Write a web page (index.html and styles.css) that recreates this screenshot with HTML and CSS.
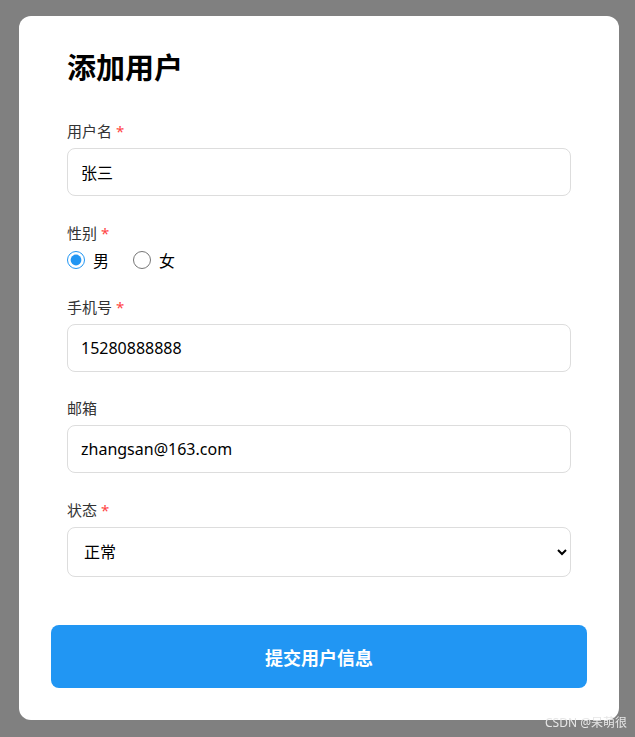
FILE: index.html
```html
<!DOCTYPE html>
<html lang="zh-CN">
<head>
    <meta charset="UTF-8">
    <meta name="viewport" content="width=device-width, initial-scale=1.0">
    <title>添加用户</title>
    <link rel="stylesheet" href="styles.css">
</head>
<body>

    <div class="card">
        <h1 class="title">添加用户</h1>

        <form id="user-form">
            <div class="fields">
                <div class="form-group">
                    <label for="username">用户名 <span class="required">*</span></label>
                    <input type="text" id="username" name="username" value="张三">
                </div>

                <div class="form-group">
                    <label>性别 <span class="required">*</span></label>
                    <div class="radio-row">
                        <label class="radio"><input type="radio" name="gender" value="male" checked> 男</label>
                        <label class="radio"><input type="radio" name="gender" value="female"> 女</label>
                    </div>
                </div>

                <div class="form-group tight">
                    <label for="phone">手机号 <span class="required">*</span></label>
                    <input type="text" id="phone" name="phone" value="15280888888">
                </div>

                <div class="form-group">
                    <label for="email">邮箱</label>
                    <input type="text" id="email" name="email" value="zhangsan@163.com">
                </div>

                <div class="form-group">
                    <label for="status">状态 <span class="required">*</span></label>
                    <select id="status" name="status">
                        <option value="1">正常</option>
                        <option value="0">禁用</option>
                    </select>
                </div>
            </div>

            <button type="button" class="submit">提交用户信息</button>
        </form>
    </div>

    <div class="watermark">CSDN @呆萌很</div>

</body>
</html>
```

FILE: styles.css
```css
html, body {
    margin: 0;
    padding: 0;
    height: 100%;
}
body {
    font-family: "Noto Sans", "Noto Sans CJK SC", sans-serif;
    background-color: #808080;
    padding: 16px 0 0 19px;
    box-sizing: border-box;
}
.card {
    width: 600px;
    box-sizing: border-box;
    background-color: #fff;
    border-radius: 12px;
    padding: 32px;
}
.title {
    margin: 0 16px;
    font-size: 29px;
    line-height: 40px;
    font-weight: bold;
    color: #000;
}
.fields {
    padding: 32px 16px 0;
}
.form-group {
    margin-bottom: 26px;
}
.form-group.tight {
    margin-bottom: 25px;
}
.form-group:last-child {
    margin-bottom: 0;
}
.form-group > label {
    display: block;
    font-size: 15px;
    line-height: 22px;
    color: #333;
    margin-bottom: 6px;
}
.required {
    color: #f44;
}
.form-group input[type="text"], .form-group select {
    display: block;
    width: 100%;
    box-sizing: border-box;
    height: 48px;
    padding: 0 13px;
    font-family: inherit;
    font-size: 16px;
    color: #000;
    background-color: #fff;
    border: 1px solid #ddd;
    border-radius: 8px;
    outline: none;
}
.form-group select {
    height: 50px;
    padding: 0 12px;
}
.radio-row {
    display: flex;
    align-items: center;
    gap: 24px;
    height: 22px;
    margin-top: -1px;
    margin-bottom: -1px;
}
.radio {
    display: flex;
    align-items: center;
    gap: 8px;
    font-size: 16px;
    color: #000;
}
.radio input {
    width: 18px;
    height: 18px;
    margin: 0;
    accent-color: #2196f3;
}
.submit {
    display: block;
    width: 100%;
    height: 63px;
    margin-top: 48px;
    background-color: #2196f3;
    color: #fff;
    border: none;
    border-radius: 8px;
    font-family: inherit;
    font-size: 18px;
    font-weight: bold;
    cursor: pointer;
}
.watermark {
    position: fixed;
    right: 8px;
    bottom: 6px;
    font-size: 12px;
    color: #e6e6e6;
}
```
